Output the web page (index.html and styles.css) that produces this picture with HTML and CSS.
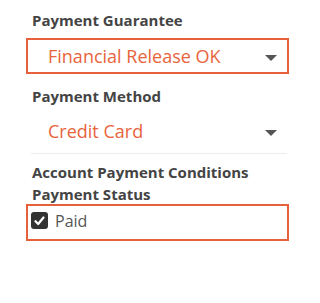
FILE: index.html
```html
<!DOCTYPE html>
<html>
<head>
<meta charset="utf-8">
<link rel="stylesheet" href="styles.css">
</head>
<body>
<div class="panel">
  <div class="label first">Payment Guarantee</div>
  <div class="select highlight">
    <span class="value">Financial Release OK</span>
    <svg class="caret" width="12" height="6" viewBox="0 0 12 6"><path d="M0 0H12L6 6Z" fill="#555"/></svg>
  </div>
  <div class="label gap-lg">Payment Method</div>
  <div class="select plain">
    <span class="value">Credit Card</span>
    <svg class="caret" width="12" height="6" viewBox="0 0 12 6"><path d="M0 0H12L6 6Z" fill="#555"/></svg>
  </div>
  <div class="sep"></div>
  <div class="label section">Account Payment Conditions</div>
  <div class="label tight">Payment Status</div>
  <div class="check highlight">
    <span class="box"><svg width="11" height="10" viewBox="0 0 11 10"><path d="M1.5 5.2L4.2 8L9.5 1.5" fill="none" stroke="#fff" stroke-width="2.2" stroke-linecap="round" stroke-linejoin="round"/></svg></span>
    <span class="check-text">Paid</span>
  </div>
</div>
</body>
</html>
```

FILE: styles.css
```css
html, body {
  margin: 0;
  padding: 0;
  background: #fff;
}
body {
  font-family: "Open Sans", "Noto Sans", sans-serif;
  width: 295px;
  height: 303px;
  overflow: hidden;
}
.panel {
  padding: 10px 6px 0 26px;
}
.label {
  font-size: 15px;
  font-weight: 700;
  color: #444;
  line-height: 20px;
  padding-left: 6px;
}
.gap-lg {
  margin-top: 12px;
}
.section {
  margin-top: 8px;
}
.tight {
  margin-top: 2px;
}
.select {
  margin-top: 8px;
  height: 32px;
  border: 2px solid transparent;
  display: flex;
  align-items: center;
  justify-content: space-between;
  padding: 0 10px 0 20px;
}
.plain {
  margin-top: 7px;
}
.highlight {
  border: 2px solid #e8603a;
}
.value {
  font-size: 18px;
  line-height: 24px;
  color: #e8643c;
}
.caret {
  display: block;
  margin-top: 4px;
}
.sep {
  margin: 4px 2px 0 5px;
  height: 1px;
  background: #ececec;
}
.check {
  height: 29px;
  display: flex;
  align-items: center;
  padding: 0 3px 4px 3px;
  gap: 7px;
}
.box {
  width: 17px;
  height: 17px;
  background: #333;
  border-radius: 3px;
  display: flex;
  align-items: center;
  justify-content: center;
}
.box svg {
  display: block;
}
.check-text {
  font-size: 16px;
  line-height: 22px;
  color: #555;
}
```
